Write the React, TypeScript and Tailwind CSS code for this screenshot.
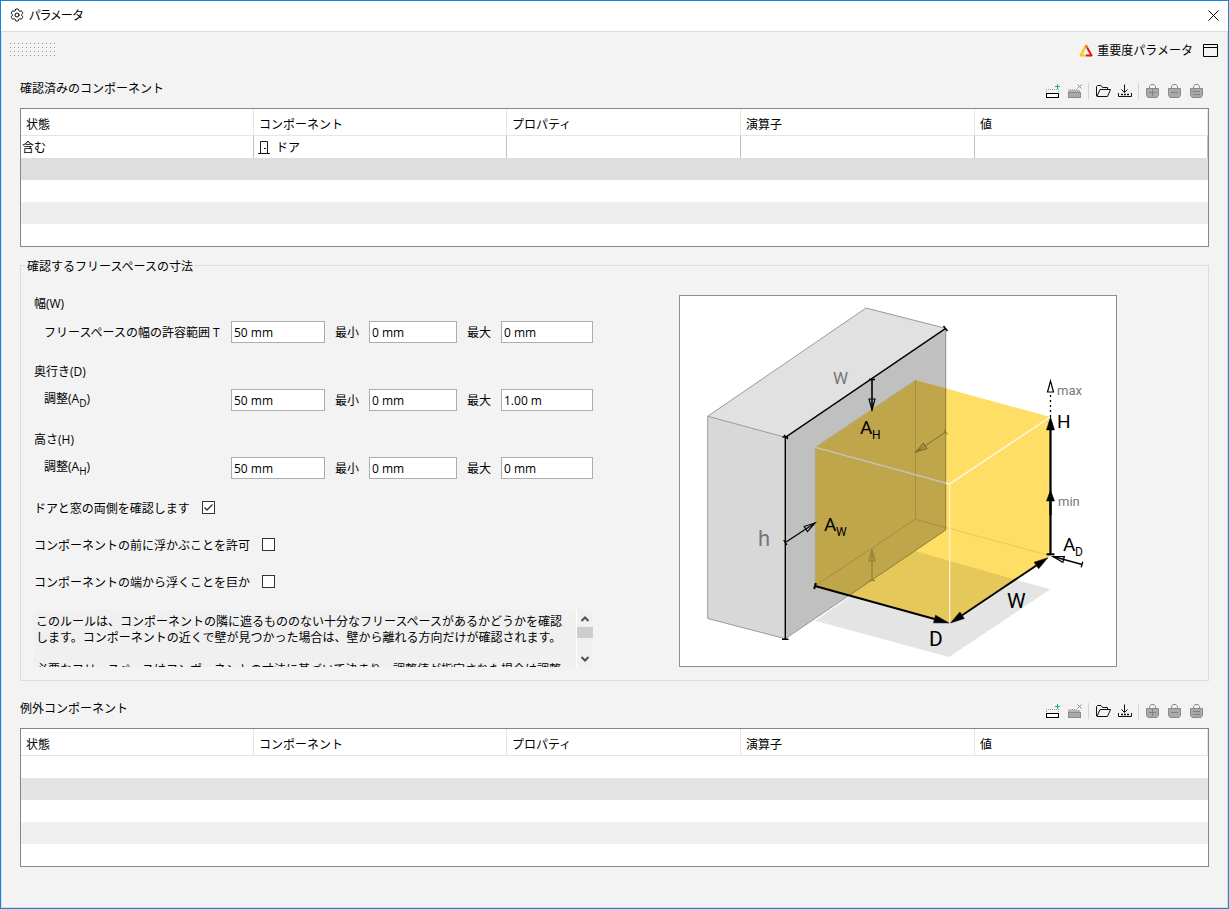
import { ReactNode } from "react";
import { HiOutlineCog6Tooth } from "react-icons/hi2";

const columns = ["状態", "コンポーネント", "プロパティ", "演算子", "値"];

const AdjustLabel = ({ axis }: { axis: string }) => (
  <span className="block pb-1">
    調整(A<sub className="-bottom-1 text-[10px]">{axis}</sub>)
  </span>
);

const dimensions = [
  {
    id: "width",
    title: "幅(W)",
    label: "フリースペースの幅の許容範囲 T",
    values: ["50 mm", "0 mm", "0 mm"],
  },
  {
    id: "depth",
    title: "奥行き(D)",
    label: <AdjustLabel axis="D" />,
    values: ["50 mm", "0 mm", "1.00 m"],
  },
  {
    id: "height",
    title: "高さ(H)",
    label: <AdjustLabel axis="H" />,
    values: ["50 mm", "0 mm", "0 mm"],
  },
];

const options = [
  { id: "both-sides", label: "ドアと窓の両側を確認します", checked: true },
  { id: "float-front", label: "コンポーネントの前に浮かぶことを許可", checked: false },
  { id: "float-edge", label: "コンポーネントの端から浮くことを巨か", checked: false },
];

const IconButton = ({
  label,
  disabled,
  children,
}: {
  label: string;
  disabled?: boolean;
  children: ReactNode;
}) => (
  <button type="button" aria-label={label} disabled={disabled} className="size-4">
    <svg viewBox="0 0 16 16" className="size-4" fill="none">
      {children}
    </svg>
  </button>
);

const Separator = () => <div className="-ml-px h-4 w-px bg-[#d4d4d4]" />;

const Bag = ({ label, d }: { label: string; d: string }) => (
  <IconButton label={label} disabled>
    <path d="M4.5 5V3.5L6 1.5H9L10.5 3.5V5" stroke="#8a8a8a" />
    <path d="M1.5 5.5H13.5V12.5L12 14.5H3L1.5 12.5Z" fill="#a9a9a9" stroke="#8a8a8a" />
    <path d={d} stroke="#808080" />
  </IconButton>
);

const Toolbar = () => (
  <div className="mr-1 flex items-center gap-1.5 pt-1.5">
    <IconButton label="行を追加">
      <path d="M1 6.5H14M1.5 8V10M13.5 8V10" stroke="#9a9a9a" strokeDasharray="1 1" />
      <rect x="1.5" y="10.5" width="12" height="4" fill="#fff" stroke="#000" />
      <path d="M12.5 1V6M10 3.5H15" stroke="#10b873" />
    </IconButton>
    <IconButton label="行を削除" disabled>
      <path d="M1 6.5H10M1.5 8V10" stroke="#a5a5a5" strokeDasharray="1 1" />
      <path d="M2 7H13V9H2Z" fill="#b4b4b4" />
      <rect x="1.5" y="9.5" width="12" height="5" fill="#a9a9a9" stroke="#8a8a8a" />
      <path d="M10.5 1.5L14.5 5.5M14.5 1.5L10.5 5.5" stroke="#8a8a8a" />
    </IconButton>
    <Separator />
    <IconButton label="開く">
      <path
        d="M1.5 13V3.5L2.5 2.5H6L7.5 4.5H12.5V6.5M2 13.5L5 6.5H15.5L12.5 13.5Z"
        stroke="#111"
        strokeLinejoin="round"
      />
    </IconButton>
    <IconButton label="保存">
      <path d="M7.5 1.5V9M4.5 6.5L7.5 9.5L10.5 6.5M1.5 10V13.5H14.5V10" stroke="#111" />
      <path d="M4 11.5H12" stroke="#111" strokeWidth="1.5" strokeDasharray="2 1" />
    </IconButton>
    <Separator />
    <Bag label="バスケットに追加" d="M7.5 6.5V13M4 9.5H11" />
    <Bag label="バスケットから削除" d="M4 9.5H11" />
    <Bag label="バスケットに設定" d="M4 8.5H11M4 11.5H11" />
  </div>
);

const Section = ({ title, children }: { title: string; children: ReactNode }) => (
  <section>
    <div className="flex h-10 items-center justify-between">
      <h2 className="pt-0.5">{title}</h2>
      <Toolbar />
    </div>
    <div className="border border-[#82878f] bg-white">
      <table className="w-full table-fixed border-separate border-spacing-0 text-left">
        <colgroup>
          <col className="w-[233px]" />
          <col className="w-[253px]" />
          <col className="w-[234px]" />
          <col className="w-[234px]" />
          <col className="w-[233px]" />
        </colgroup>
        <thead>
          <tr>
            {columns.map((column) => (
              <th
                key={column}
                className="h-[27px] border-r border-b border-[#e5e5e5] px-[5px] pt-1.5 font-normal"
              >
                {column}
              </th>
            ))}
          </tr>
        </thead>
        <tbody>{children}</tbody>
      </table>
    </div>
  </section>
);

const EmptyRow = ({ className }: { className?: string }) => (
  <tr className={className}>
    <td colSpan={5} className="h-[22px] p-0" />
  </tr>
);

type ArrowProps = {
  from: [number, number];
  to: [number, number];
  color?: string;
  width?: number;
  size?: number;
  solid?: boolean;
  tick?: boolean;
  dashed?: boolean;
};

const Arrow = ({
  from,
  to,
  color = "#000",
  width = 1.3,
  size = 11,
  solid,
  tick,
  dashed,
}: ArrowProps) => {
  const [x1, y1] = from;
  const [x2, y2] = to;
  const len = Math.hypot(x2 - x1, y2 - y1);
  const ux = (x2 - x1) / len;
  const uy = (y2 - y1) / len;
  const bx = x2 - ux * size;
  const by = y2 - uy * size;
  const half = solid ? 4 : 3;
  return (
    <g stroke={color} fill={solid ? color : "none"}>
      <line
        x1={x1}
        y1={y1}
        x2={dashed || solid ? bx : x2}
        y2={dashed || solid ? by : y2}
        strokeWidth={width}
        strokeDasharray={dashed ? "2 3" : undefined}
      />
      <polygon
        points={`${x2},${y2} ${bx - uy * half},${by + ux * half} ${bx + uy * half},${by - ux * half}`}
        strokeWidth={solid ? 0.5 : 1.2}
      />
      {tick && (
        <line x1={x1 - uy * 3} y1={y1 + ux * 3} x2={x1 + uy * 3} y2={y1 - ux * 3} strokeWidth={width} />
      )}
    </g>
  );
};

const Diagram = () => (
  <svg viewBox="0 0 438 372" fontFamily="Roboto, sans-serif" className="h-[372px] w-[438px] shrink-0 bg-white">
    {/* shadow */}
    <polygon points="136,325.7 236,256.7 371.3,294.3 270,362" fill="#e4e4e4" />

    {/* wall */}
    <polygon points="28.7,121.3 187,13 266.7,33.3 106.3,142.3" fill="#e1e1e1" />
    <polygon points="28.7,121.3 106.3,142.3 106.3,343.7 28.7,323.5" fill="#d8d8d8" />
    <polygon points="106.3,142.3 266.7,33.3 266.7,235 106.3,343.7" fill="#c0c0c0" />
    <path
      d="M106.3 142.3L28.7 121.3L187 13L266.7 33.3M28.7 121.3V323.5L106.3 343.7L266.7 235"
      fill="none"
      stroke="#9a9a9a"
    />

    {/* free space box */}
    <polygon points="136,152.3 236.3,85 371.3,122 371.3,260.7 270.7,328 136,291" fill="#ffde66" />
    <polygon points="170.2,300.4 236,256 335.8,284.5 270.7,328" fill="#e6c75a" />
    <polygon points="136,152.3 236.3,85 266.7,93.3 266.7,235 170.2,300.4 136,291" fill="#bfa64b" />
    <path d="M236.5 85V224.3L136 291" fill="none" stroke="#a48e41" />
    <path d="M236.5 224.3L266.7 232.5" stroke="#a48e41" />
    <path d="M266.7 232.5L371.3 260.7" stroke="#e6c75c" />
    <path d="M170.2 300.4L266.7 235" stroke="#8f7c38" />
    <path d="M266.7 33.3V93" stroke="#8c8c8c" />
    <path d="M266.7 93V235" stroke="#8f7c38" />
    <path d="M136 291V152.3L236.3 85" fill="none" stroke="#b5b09e" />
    <path d="M136 152.3L266.7 188" stroke="#c6c1b0" strokeWidth="1.5" />
    <path d="M266.7 188L270.7 189L371.3 122" fill="none" stroke="#fff6dc" strokeWidth="1.6" />
    <path d="M270.7 189V328" stroke="#fff3cf" strokeWidth="1.3" />

    {/* wall measures */}
    <path
      d="M106.3 343.7V142.3L266.7 33.3M103 344.2H109.5M103.5 142H109M105 140L109 144M264.5 31L268.5 36"
      fill="none"
      stroke="#000"
      strokeWidth="1.4"
    />
    <Arrow from={[193, 84.5]} to={[193, 115]} width={1.6} tick />
    <Arrow from={[106.3, 247.5]} to={[136, 228]} tick />
    <Arrow from={[266.7, 137]} to={[237, 157]} color="#7d6c2e" width={1} tick />
    <Arrow from={[193, 285.5]} to={[193, 255]} color="#94803a" tick />

    {/* box measures */}
    <Arrow from={[371.5, 122]} to={[371.5, 86]} dashed />
    <Arrow from={[371.5, 260]} to={[371.5, 122]} width={2.2} size={13} solid />
    <Arrow from={[371.5, 220]} to={[371.5, 195]} width={2.2} solid />
    <path d="M367.5 259.3H375.5" stroke="#000" strokeWidth="2" />
    <Arrow from={[136, 291]} to={[270, 328]} width={2} size={15} solid tick />
    <Arrow from={[320, 295.5]} to={[369, 262.7]} width={2} size={14} solid />
    <Arrow from={[320, 295.5]} to={[271.5, 328]} width={2} size={14} solid />
    <Arrow from={[403, 269.5]} to={[374, 261.5]} tick />

    <g fontSize="19" fill="#000">
      <text x="181" y="139">A</text>
      <text x="193" y="144" fontSize="12">H</text>
      <text x="145" y="236">A</text>
      <text x="157" y="241" fontSize="12">W</text>
      <text x="384" y="256">A</text>
      <text x="396" y="261" fontSize="12">D</text>
      <text x="378" y="133">H</text>
    </g>
    <g fontSize="21" fill="#000">
      <text x="328" y="313">W</text>
      <text x="250" y="351">D</text>
    </g>
    <g fill="#777">
      <text x="154" y="89" fontSize="17">W</text>
      <text x="79" y="251" fontSize="22">h</text>
      <text x="378" y="100" fontSize="13">max</text>
      <text x="379" y="211" fontSize="13">min</text>
    </g>
    <rect x="0.5" y="0.5" width="437" height="371" fill="none" stroke="#8f8f8f" />
  </svg>
);

const Field = ({ id, label, value }: { id: string; label?: string; value: string }) => (
  <>
    {label && (
      <label htmlFor={id} className="pt-0.5 text-center">
        {label}
      </label>
    )}
    <input
      id={id}
      type="text"
      defaultValue={value}
      className="h-[22px] w-full border border-[#abadb3] bg-white px-0.5 outline-none"
    />
  </>
);

const App = () => {
  return (
    <div className="flex min-h-screen flex-col border border-[#1883d7] bg-[#f3f3f3] font-['Open_Sans','Noto_Sans_CJK_JP',sans-serif] text-xs text-black">
      <header className="flex h-[30px] items-center justify-between bg-white pr-[9px] pb-0.5 pl-2">
        <div className="flex items-center gap-1">
          <HiOutlineCog6Tooth className="size-4" />
          <h1 className="pt-0.5 [font-feature-settings:'palt']">パラメータ</h1>
        </div>
        <button type="button" aria-label="閉じる">
          <svg viewBox="0 0 11 11" className="size-[11px]" fill="none" stroke="#000">
            <path d="M0.5 0.5L10.5 10.5M10.5 0.5L0.5 10.5" />
          </svg>
        </button>
      </header>

      <main className="flex-1 border border-[#dcdcdc]">
        <div className="flex h-9 items-center justify-between pr-[9px] pl-2">
          <svg width="48" height="15" className="text-[#8d949c]">
            <defs>
              <pattern id="grip" width="4" height="4" patternUnits="userSpaceOnUse">
                <rect width="1" height="1" fill="currentColor" />
                <rect x="1" y="1" width="1" height="1" fill="#fff" />
              </pattern>
            </defs>
            <rect width="48" height="15" fill="url(#grip)" />
          </svg>
          <div className="flex items-center gap-2.5">
            <button type="button" className="flex items-center gap-1">
              <svg viewBox="0 0 14 13" className="h-[13px] w-3.5" fill="none" strokeWidth="2">
                <path d="M7 1.5L1.5 11.5H7" stroke="#fbc318" strokeLinejoin="round" />
                <path d="M7 11.5H12.5L7 1.5" stroke="#dc1414" strokeLinejoin="round" />
                <path d="M6 2.5L8.5 3.5" stroke="#f08a12" />
              </svg>
              <span className="pt-0.5">重要度パラメータ</span>
            </button>
            <button type="button" aria-label="最大化">
              <svg viewBox="0 0 15 13" className="h-[13px] w-[15px]" fill="none" stroke="#000">
                <path d="M0.5 0.5H14.5V12.5H0.5ZM0.5 3.5H14.5" />
              </svg>
            </button>
          </div>
        </div>

        <div className="px-[18px]">
          <Section title="確認済みのコンポーネント">
            <tr>
              <td className="h-[22px] border-r border-[#c0c0c0] px-px pt-0.5 pb-0">含む</td>
              <td className="border-r border-[#c0c0c0] px-1 py-0">
                <div className="flex items-center gap-1.5">
                  <svg viewBox="0 0 12 13" className="h-[13px] w-3" fill="none" stroke="#1a1a1a">
                    <path d="M2.5 12.5V0.5H9.5V12.5M0 12.5H12M6 7.5H8" />
                  </svg>
                  <span className="pt-0.5">ドア</span>
                </div>
              </td>
              <td className="border-r border-[#c0c0c0] p-0" />
              <td className="border-r border-[#c0c0c0] p-0" />
              <td className="border-r border-[#c0c0c0] p-0" />
            </tr>
            <EmptyRow className="bg-[#dedede]" />
            <EmptyRow />
            <EmptyRow className="bg-[#eeeeee]" />
            <EmptyRow />
          </Section>

          <fieldset className="mt-2 border border-[#dcdcdc] px-3 pb-[13px]">
            <legend className="-ml-2 h-5 px-0.5 leading-6">確認するフリースペースの寸法</legend>
            <div className="flex items-end gap-[86px] pt-[19px]">
              <div className="w-[560px] shrink-0 pl-px">
                <div className="flex flex-col gap-[19px]">
                  {dimensions.map(({ id, title, label, values }) => (
                    <div key={id}>
                      <h3 className="mb-[7px] h-5 leading-5">{title}</h3>
                      <div className="grid h-[22px] grid-cols-[197px_94px_44px_88px_44px_92px] items-center">
                        <label htmlFor={`${id}-base`} className="pt-0.5 pl-2.5 whitespace-nowrap">
                          {label}
                        </label>
                        <Field id={`${id}-base`} value={values[0]} />
                        <Field id={`${id}-min`} label="最小" value={values[1]} />
                        <Field id={`${id}-max`} label="最大" value={values[2]} />
                      </div>
                    </div>
                  ))}
                </div>

                <div className="my-2.5">
                  {options.map(({ id, label, checked }) => (
                    <div key={id} className="flex h-[37px] items-center gap-3">
                      <label htmlFor={id} className="pt-0.5">
                        {label}
                      </label>
                      <span className="grid size-[13px]">
                        <input
                          id={id}
                          type="checkbox"
                          defaultChecked={checked}
                          className="peer col-start-1 row-start-1 size-[13px] appearance-none border border-[#333] bg-white"
                        />
                        <svg
                          viewBox="0 0 13 13"
                          className="pointer-events-none invisible col-start-1 row-start-1 size-[13px] peer-checked:visible"
                          fill="none"
                          stroke="#333"
                          strokeWidth="1.4"
                        >
                          <path d="M2.5 6.5L5 9L10.5 3.5" />
                        </svg>
                      </span>
                    </div>
                  ))}
                </div>

                <div className="flex h-[57px] bg-[#f0f0f0]">
                  <div className="flex-1 overflow-hidden border-r border-white px-0.5 pt-1 leading-4 whitespace-nowrap">
                    <p>
                      このルールは、コンポーネントの隣に遮るもののない十分なフリースペースがあるかどうかを確認
                      <br />
                      します。コンポーネントの近くで壁が見つかった場合は、壁から離れる方向だけが確認されます。
                    </p>
                    <p className="mt-4">
                      必要なフリースペースはコンポーネントの寸法に基づいて決まり、調整値が指定された場合は調整
                    </p>
                  </div>
                  <div className="flex w-4 flex-col">
                    <button type="button" aria-label="上へ" className="flex h-[17px] items-center justify-center">
                      <svg width="8" height="6" fill="none" stroke="#505050" strokeWidth="2">
                        <path d="M0.5 5L4 1.5L7.5 5" />
                      </svg>
                    </button>
                    <div className="h-[11px] bg-[#cdcdcd]" />
                    <button type="button" aria-label="下へ" className="mt-auto flex h-[17px] items-center justify-center">
                      <svg width="8" height="6" fill="none" stroke="#505050" strokeWidth="2">
                        <path d="M0.5 1L4 4.5L7.5 1" />
                      </svg>
                    </button>
                  </div>
                </div>
              </div>
              <Diagram />
            </div>
          </fieldset>

          <div className="mt-[7px]">
            <Section title="例外コンポーネント">
              <EmptyRow />
              <EmptyRow className="bg-[#e3e3e3]" />
              <EmptyRow />
              <EmptyRow className="bg-[#f0f0f0]" />
              <EmptyRow />
            </Section>
          </div>
        </div>
      </main>
    </div>
  );
};

export default App;
